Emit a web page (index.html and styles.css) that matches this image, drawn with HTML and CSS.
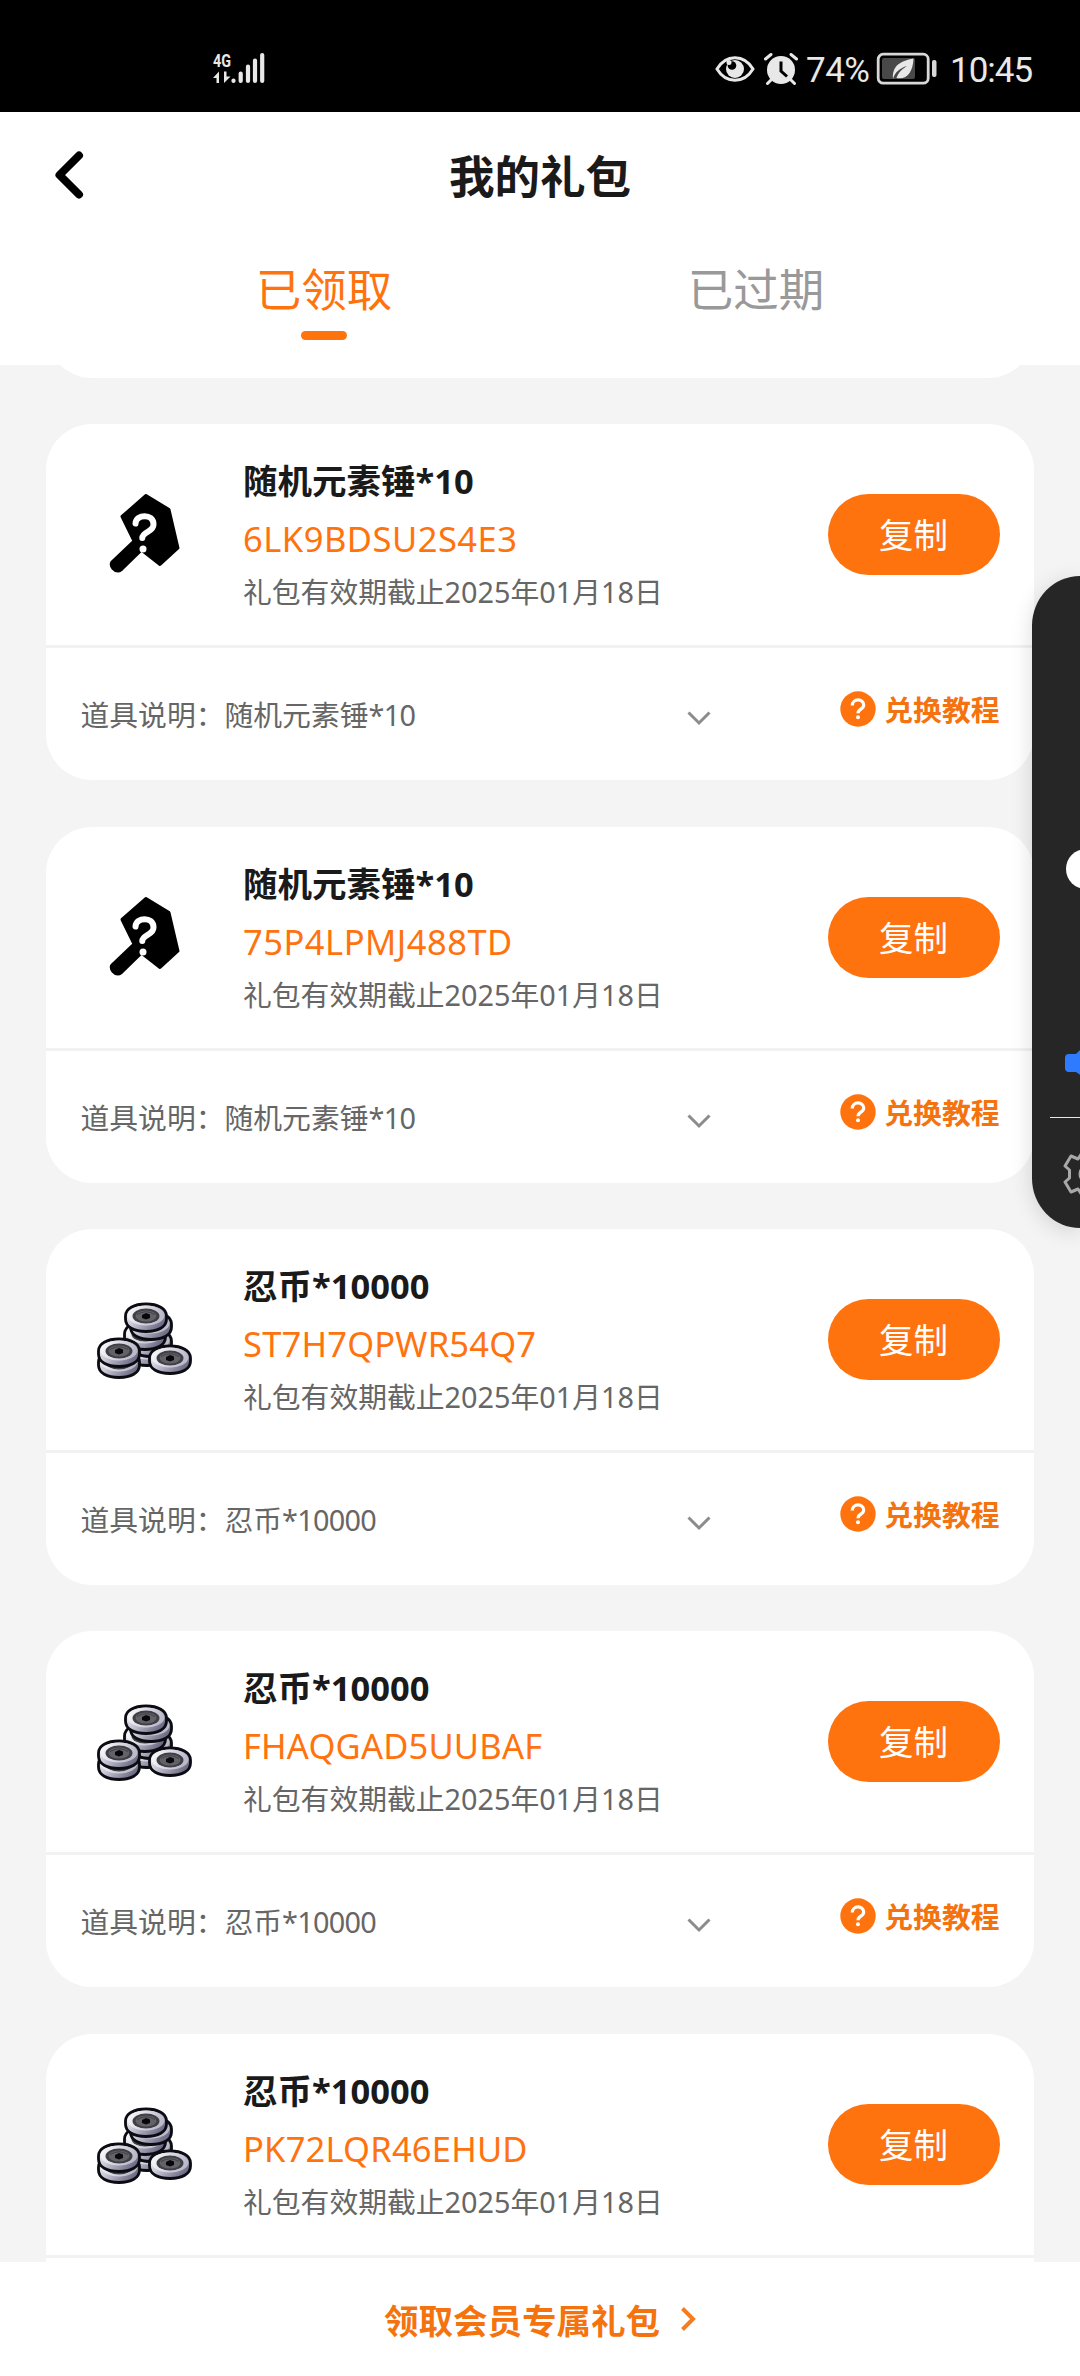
FILE: index.html
```html
<!DOCTYPE html>
<html lang="zh-CN">
<head>
<meta charset="utf-8">
<title>我的礼包</title>
<link rel="stylesheet" href="styles.css">
</head>
<body>
<svg class="defs" width="0" height="0" aria-hidden="true">
  <defs>
    <linearGradient id="metal" x1="0" y1="0" x2="1" y2="0.6">
      <stop offset="0" stop-color="#ffffff"/>
      <stop offset="0.45" stop-color="#c9c7d6"/>
      <stop offset="1" stop-color="#6b6882"/>
    </linearGradient>
    <linearGradient id="face" x1="0" y1="0" x2="1" y2="0.3">
      <stop offset="0" stop-color="#ffffff"/>
      <stop offset="1" stop-color="#bbb9ca"/>
    </linearGradient>
    <symbol id="hammer" viewBox="0 0 120 120">
      <path d="M66 25.500 L89 39.500 L98 78 L80 94.500 L61.500 80 L41.500 99.500 Q37 103 33 98.500 Q29.500 94 33 91 L54 71 L42 46.500 Z" fill="#000" stroke="#000" stroke-width="3" stroke-linejoin="round"/>
      <path d="M55.500 53.500 C56 44 73.500 43 73.500 54.500 C73.500 62.500 62.500 61 62.300 68" fill="none" stroke="#fff" stroke-width="6" stroke-linecap="round"/>
      <circle cx="63" cy="79" r="3.500" fill="#fff"/>
    </symbol>
    <g id="coin">
      <path d="M-20.500 -1 C-20.500 -8.500 -12 -13 0 -13 S20.500 -8.500 20.500 -1 V2 C20.500 10 12 14.500 0 14.500 S-20.500 10 -20.500 2Z" fill="url(#metal)" stroke="#0b0b12" stroke-width="2.800"/>
      <ellipse cx="0" cy="-1.500" rx="18.500" ry="10" fill="url(#face)"/>
      <ellipse cx="0" cy="-1" rx="13.500" ry="7.500" fill="#3f3f45"/>
      <ellipse cx="0" cy="-1" rx="10.500" ry="5.500" fill="#626268"/>
      <path d="M-9 -2.500 Q0 -8 9 -2.500" fill="none" stroke="#3f3f45" stroke-width="1"/>
      <path d="M-4 -2 L0 -4 L4 -2.500 V1 L0 2.500 L-4 1Z" fill="#08080c"/>
    </g>
    <symbol id="coins" viewBox="0 0 120 120">
      <use href="#coin" x="67" y="76"/>
      <use href="#coin" x="71" y="67"/>
      <use href="#coin" x="65" y="60"/>
      <use href="#coin" x="71" y="50"/>
      <use href="#coin" x="66" y="42"/>
      <use href="#coin" x="39" y="88"/>
      <use href="#coin" x="39" y="77"/>
      <use href="#coin" x="90" y="84"/>
    </symbol>
    <symbol id="down" viewBox="0 0 24 16">
      <path d="M1.500 2.500 L12 13 L22.500 2.500" fill="none" stroke="#8c8c8c" stroke-width="3"/>
    </symbol>
    <symbol id="help" viewBox="0 0 36 36">
      <circle cx="18" cy="18" r="17.700" fill="#ff730f"/>
      <path d="M12.300 14.500 C12.300 7.200 23.700 7.200 23.700 14 C23.700 18.500 18 17.800 18 22.300" fill="none" stroke="#fff" stroke-width="3.200"/>
      <circle cx="18" cy="26.300" r="2" fill="#fff"/>
    </symbol>
  </defs>
</svg>

<div class="screen">
  <header class="status">
    <svg class="signal" viewBox="0 0 56 40" aria-hidden="true">
      <text class="net" x="2" y="17" textLength="18" lengthAdjust="spacingAndGlyphs">4G</text>
      <path d="M2 28 L8 21.500 V33 H5.500 V28Z M13 21.500 H15.500 V26.500 H19.500 L13 33Z" fill="#e8e8e8"/>
      <g stroke="#e8e8e8" stroke-width="4.200" stroke-linecap="round">
        <path d="M22.500 30.500V31M29.700 23.500V31M37 16.500V31M44 10.500V31M51.200 5V31"/>
      </g>
    </svg>
    <div class="status-right">
      <svg class="eye" viewBox="0 0 40 28" aria-hidden="true">
        <path d="M2 14 C11 -1 29 -1 38 14 C29 29 11 29 2 14Z" fill="none" stroke="#e8e8e8" stroke-width="3"/>
        <circle cx="20" cy="14" r="9" fill="#e8e8e8"/><circle cx="17" cy="10.500" r="4.300" fill="#000"/><circle cx="14" cy="7.500" r="2.500" fill="#e8e8e8"/>
      </svg>
      <svg class="alarm" viewBox="0 0 34 32" aria-hidden="true">
        <circle cx="17" cy="17" r="14" fill="#e8e8e8"/>
        <path d="M1.500 6 L7 1.500 M32.500 6 L27 1.500 M7 27 L3.500 30.500 M27 27 L30.500 30.500" stroke="#e8e8e8" stroke-width="3" stroke-linecap="round"/>
        <path d="M17 8.500V18L23 23.500" fill="none" stroke="#000" stroke-width="3"/>
      </svg>
      <span class="percent">74%</span>
      <svg class="battery" viewBox="0 0 62 34" aria-hidden="true">
        <rect x="2.200" y="2.200" width="50" height="29" rx="5" fill="none" stroke="#d8d8d8" stroke-width="2.800"/>
        <rect x="6" y="6" width="33" height="21" rx="2" fill="#484848"/>
        <path d="M17 27 C16 14 24 9 37.500 6.500 C37 20 31 28 20.500 26 C22 21 26 17 31 14 C24 16 19 20 17 27Z" fill="#e8e8e8"/>
        <rect x="56" y="8" width="4.500" height="17" rx="2" fill="#d8d8d8"/>
      </svg>
      <span class="clock">10:45</span>
    </div>
  </header>

  <nav class="nav">
    <svg class="back" viewBox="0 0 30 50" aria-label="返回"><path d="M25 5.500 L5.500 25 L25 44.500" fill="none" stroke="#000" stroke-width="8" stroke-linecap="round" stroke-linejoin="round"/></svg>
    <h1 class="nav-title">我的礼包</h1>
  </nav>
  <div class="tabs">
    <div class="tab tab-active">已领取</div>
    <div class="tab">已过期</div>
  </div>

  <main class="list">
    <article class="card card-passed"></article>
    <article class="card">
      <div class="card-main">
        <svg class="thumb"><use href="#hammer"/></svg>
        <div class="info">
          <h2 class="name">随机元素锤*10</h2>
          <p class="code code-wide">6LK9BDSU2S4E3</p>
          <p class="expiry">礼包有效期截止2025年01月18日</p>
        </div>
        <button class="copy">复制</button>
      </div>
      <div class="card-foot">
        <p class="desc">道具说明：随机元素锤<span class="count">*10</span></p>
        <svg class="down"><use href="#down"/></svg>
        <a class="guide"><svg class="help"><use href="#help"/></svg>兑换教程</a>
      </div>
    </article>
    <article class="card">
      <div class="card-main">
        <svg class="thumb"><use href="#hammer"/></svg>
        <div class="info">
          <h2 class="name">随机元素锤*10</h2>
          <p class="code code-wide">75P4LPMJ488TD</p>
          <p class="expiry">礼包有效期截止2025年01月18日</p>
        </div>
        <button class="copy">复制</button>
      </div>
      <div class="card-foot">
        <p class="desc">道具说明：随机元素锤<span class="count">*10</span></p>
        <svg class="down"><use href="#down"/></svg>
        <a class="guide"><svg class="help"><use href="#help"/></svg>兑换教程</a>
      </div>
    </article>
    <article class="card">
      <div class="card-main">
        <svg class="thumb"><use href="#coins"/></svg>
        <div class="info">
          <h2 class="name">忍币*10000</h2>
          <p class="code">ST7H7QPWR54Q7</p>
          <p class="expiry">礼包有效期截止2025年01月18日</p>
        </div>
        <button class="copy">复制</button>
      </div>
      <div class="card-foot">
        <p class="desc">道具说明：忍币<span class="count">*10000</span></p>
        <svg class="down"><use href="#down"/></svg>
        <a class="guide"><svg class="help"><use href="#help"/></svg>兑换教程</a>
      </div>
    </article>
    <article class="card">
      <div class="card-main">
        <svg class="thumb"><use href="#coins"/></svg>
        <div class="info">
          <h2 class="name">忍币*10000</h2>
          <p class="code">FHAQGAD5UUBAF</p>
          <p class="expiry">礼包有效期截止2025年01月18日</p>
        </div>
        <button class="copy">复制</button>
      </div>
      <div class="card-foot">
        <p class="desc">道具说明：忍币<span class="count">*10000</span></p>
        <svg class="down"><use href="#down"/></svg>
        <a class="guide"><svg class="help"><use href="#help"/></svg>兑换教程</a>
      </div>
    </article>
    <article class="card">
      <div class="card-main">
        <svg class="thumb"><use href="#coins"/></svg>
        <div class="info">
          <h2 class="name">忍币*10000</h2>
          <p class="code">PK72LQR46EHUD</p>
          <p class="expiry">礼包有效期截止2025年01月18日</p>
        </div>
        <button class="copy">复制</button>
      </div>
      <div class="card-foot"></div>
    </article>
  </main>

  <footer class="claim">
    <span>领取会员专属礼包</span>
    <svg class="next" viewBox="0 0 16 26" aria-hidden="true"><path d="M2.500 2.500 L13 13 L2.500 23.500" fill="none" stroke="#f57c1f" stroke-width="4"/></svg>
  </footer>

  <aside class="volume">
    <svg viewBox="0 0 48 652" width="48" height="652" aria-hidden="true">
      <circle cx="54" cy="293" r="20" fill="#fff"/>
      <path d="M37 478 H44 L50 472 V500 L44 496 H37 Q33 496 33 492 V482 Q33 478 37 478Z" fill="#2f7bff"/>
      <path d="M18 541.500H48" stroke="#e8e8e8" stroke-width="1.200"/>
      <path d="M50 577 L46 583 L39 580 L33 590 L37.500 594 V602 L33 606 L39 616 L46 613 L50 619" fill="none" stroke="#a8a8a8" stroke-width="3" stroke-linejoin="round"/>
      <circle cx="56" cy="598" r="8" fill="none" stroke="#a8a8a8" stroke-width="3"/>
    </svg>
  </aside>
</div>
</body>
</html>
```
FILE: styles.css
```css
* { box-sizing: border-box; }
body {
  margin: 0;
  background: #f4f4f4;
  font-family: "Noto Sans", "Noto Sans CJK SC", sans-serif;
}
h1, h2, p { margin: 0; }
svg { display: block; flex: none; }
.defs { position: absolute; }

.screen {
  position: relative;
  display: flex;
  flex-direction: column;
  width: 1080px;
  height: 2376px;
  overflow: hidden;
}

/* status bar */
.status {
  display: flex;
  justify-content: space-between;
  flex: none;
  height: 112px;
  padding: 50px 48px 0 211px;
  background: #000;
  color: #e8e8e8;
}
.signal { width: 56px; height: 40px; }
.net { fill: #e8e8e8; font: 700 19px Roboto, sans-serif; }
.status-right { display: flex; align-items: center; height: 38px; font: 400 35px/38px Roboto, sans-serif; }
.percent, .clock { padding-top: 3px; white-space: nowrap; }
.eye { width: 40px; height: 28px; margin-right: 9px; }
.alarm { width: 34px; height: 32px; margin-right: 8px; }
.percent { width: 70px; letter-spacing: -0.5px; }
.battery { width: 62px; height: 34px; margin-right: 12px; }
.clock { width: 82px; letter-spacing: -1px; }

/* title and tabs */
.nav {
  display: flex;
  align-items: center;
  flex: none;
  height: 126px;
  padding: 0 54px;
  background: #fff;
}
.back { width: 30px; height: 50px; }
.nav-title { flex: 1; margin-right: 30px; padding-bottom: 2px; text-align: center; font: 700 45.5px/64px "Noto Sans CJK SC", sans-serif; color: #1a1a1a; }
.tabs {
  display: flex;
  flex: none;
  height: 127px;
  padding: 17px 108px 0;
  background: #fff;
}
.tab { flex: 1; font: 400 45.5px/64px "Noto Sans CJK SC", sans-serif; text-align: center; color: #999; }
.tab-active { color: #ff730f; }
.tab-active::after {
  content: "";
  display: block;
  width: 46px;
  height: 9px;
  margin: 12px auto 0;
  border-radius: 5px;
  background: #ff730f;
}

/* gift cards */
.list { flex: 1; min-height: 0; overflow: hidden; padding: 0 46px; }
.card {
  height: 356px;
  margin-bottom: 46.35px;
  border-radius: 46px;
  background: #fff;
}
.card-passed { margin-top: -343px; }
.card-main {
  display: flex;
  height: 224px;
  padding: 29px 34.5px 0 34px;
  border-bottom: 3px solid #f2f2f2;
}
.thumb { width: 120px; height: 120px; margin-top: 17px; }
.info { flex: 1; margin-left: 43px; white-space: nowrap; }
.name { font-size: 34.5px; line-height: 56px; font-weight: 700; color: #1a1a1a; }
.code { padding-top: 1px; font-size: 34.5px; line-height: 57px; letter-spacing: 0.2px; color: #ff730f; }
.code-wide { letter-spacing: 0.5px; }
.expiry { font-size: 28.8px; line-height: 50px; color: #666; }
.copy {
  width: 172px;
  height: 81px;
  margin-top: 41px;
  padding: 0 0 2px;
  border: 0;
  border-radius: 41px;
  background: #ff730f;
  color: #fff;
  font: 400 34.5px/79px "Noto Sans CJK SC", sans-serif;
}
.card-foot { display: flex; height: 132px; padding: 0 34.5px; }
.desc { width: 606.5px; padding-top: 42px; font-size: 28.8px; line-height: 50px; color: #666; white-space: nowrap; }
.count { letter-spacing: -0.7px; }
.down { width: 24px; height: 16px; margin-top: 62px; }
.guide {
  display: flex;
  align-items: center;
  height: 36px;
  margin: 43px 0 0 auto;
  gap: 8px;
  font: 700 28.8px/36px "Noto Sans CJK SC", sans-serif;
  color: #f5730f;
}
.help { width: 36px; height: 36px; }

/* bottom action */
.claim {
  display: flex;
  align-items: center;
  justify-content: center;
  flex: none;
  gap: 20px;
  height: 114px;
  padding-bottom: 1px;
  background: #fff;
  font: 700 34.5px/50px "Noto Sans CJK SC", sans-serif;
  color: #f5730f;
}
.next { width: 16px; height: 26px; }

/* system volume panel, slides in over the page */
.volume {
  position: absolute;
  top: 576px;
  right: 0;
  width: 48px;
  height: 652px;
  border-radius: 56px 0 0 56px / 58px 0 0 58px;
  background: #262626;
  box-shadow: 0 4px 22px rgba(0, 0, 0, 0.14);
  overflow: hidden;
}
```
